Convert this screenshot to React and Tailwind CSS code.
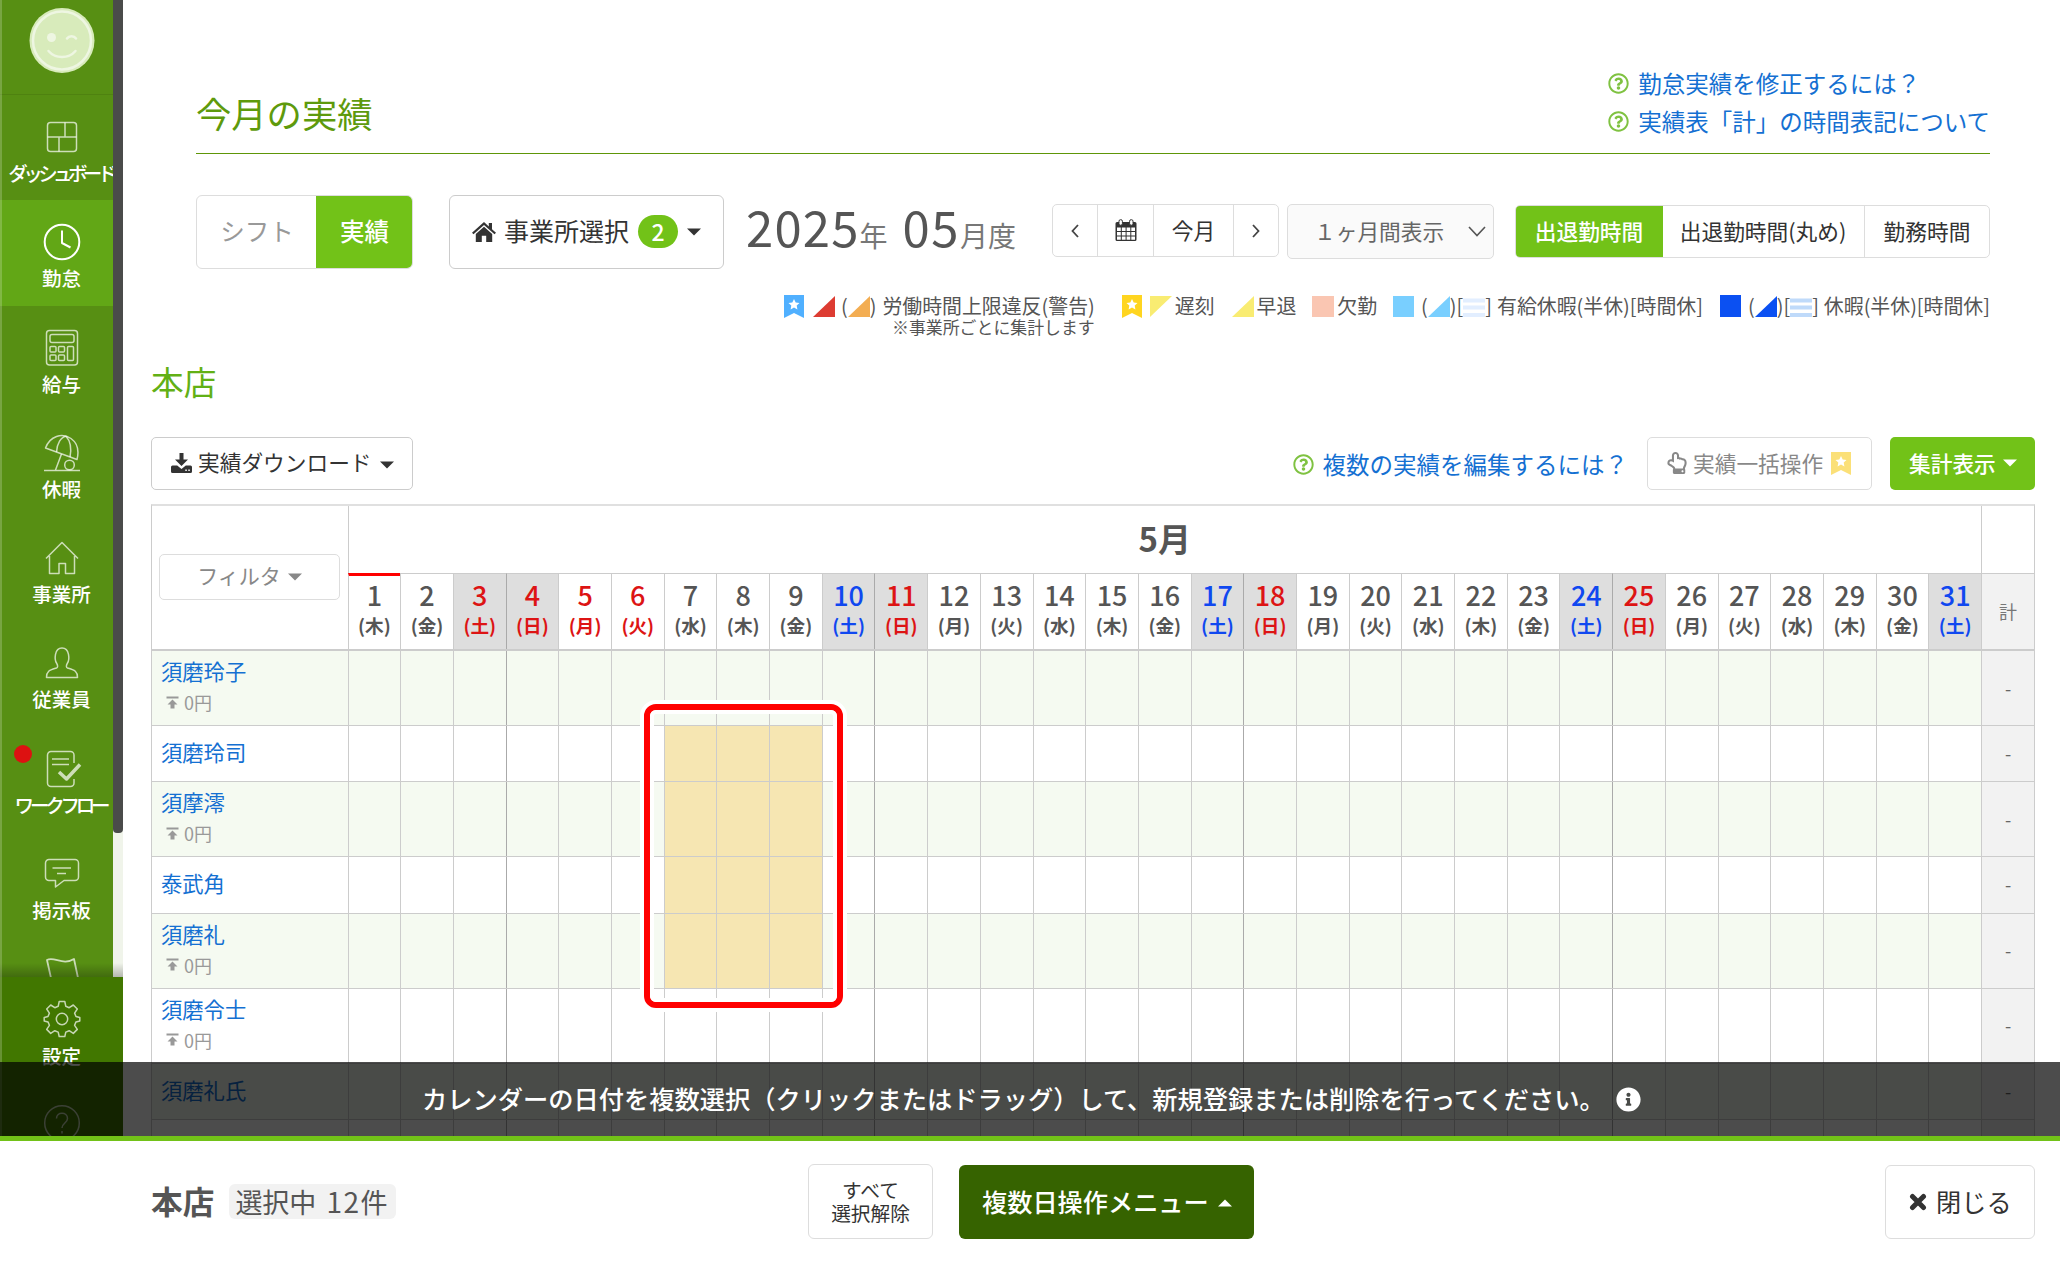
import clsx from "clsx";
import { FaInfoCircle, FaRegHandPointUp, FaRegQuestionCircle } from "react-icons/fa";

const WEEK = ["木", "金", "土", "日", "月", "火", "水"];
const RED_DAYS = [3, 4, 5, 6, 11, 18, 25];
const BLUE_DAYS = [10, 17, 24, 31];
const GRAY_DAYS = [3, 4, 10, 11, 17, 18, 24, 25, 31];
const SUNDAYS = [4, 11, 18, 25];

const days = Array.from({ length: 31 }, (_, i) => ({ day: i + 1, week: WEEK[i % 7] }));

const employees = [
  { name: "須磨玲子", pay: "0円" },
  { name: "須磨玲司", selected: true },
  { name: "須摩澪", pay: "0円", selected: true },
  { name: "泰武角", selected: true },
  { name: "須磨礼", pay: "0円", selected: true },
  { name: "須磨令士", pay: "0円" },
  { name: "須磨礼氏" },
  { name: "" },
];

/* ---------- icons ---------- */

const Line = ({ w, h, sw = 1.5, children, className }) => (
  <svg width={w} height={h} viewBox={`0 0 ${w} ${h}`} fill="none" stroke="currentColor" strokeWidth={sw} strokeLinejoin="round" className={className}>
    {children}
  </svg>
);

const DashboardIcon = () => (
  <Line w={32} h={32}>
    <rect x="1.5" y="1.5" width="29" height="29" rx="3" />
    <path d="M1.5 16h29M19 1.5V16M13 16v14.5" />
  </Line>
);

const ClockIcon = () => (
  <Line w={38} h={38} sw={2}>
    <circle cx="19" cy="19" r="17.3" />
    <path d="M19 7.5V20l8.5 4.5" />
  </Line>
);

const CalcIcon = () => (
  <Line w={34} h={38}>
    <rect x="1.5" y="1.5" width="31" height="34.5" rx="3" />
    <rect x="5" y="5.5" width="24" height="8" rx="2" />
    <rect x="5" y="17.5" width="6" height="5.5" rx="1" />
    <rect x="13.5" y="17.5" width="6" height="5.5" rx="1" />
    <rect x="5" y="26" width="6" height="5.5" rx="1" />
    <rect x="13.5" y="26" width="6" height="5.5" rx="1" />
    <rect x="22.5" y="17.5" width="6" height="14" rx="1" />
  </Line>
);

const ParasolIcon = () => (
  <Line w={36} h={38}>
    <path d="M1.5 14C6 2 18-1.500 27 4.500c7 5 8 13 6 21z" />
    <path d="M12.500 18C13 9 17 3 22 2.200M26 23c1.500-8 .5-16-4-20.800M17.500 20 11.500 36" />
    <circle cx="25.500" cy="31" r="4.800" />
    <path d="M0 36.500h36" />
  </Line>
);

const HouseIcon = () => (
  <Line w={34} h={36}>
    <path d="M1 18.500 17 2.500l16 16M4.500 16v17.500h9.500V23.500h6.500v10h9V16" />
  </Line>
);

const PersonIcon = () => (
  <Line w={34} h={34}>
    <path d="M1.500 31.500c0-6 2.500-7.500 10-9.500 1.500-.5 1.500-2.500 0-5-2-3-2.500-15 5.500-15s7.500 12 5.500 15c-1.500 2.500-1.500 4.500 0 5 7.500 2 10 3.500 10 9.500z" />
  </Line>
);

const WorkflowIcon = () => (
  <Line w={36} h={38} className="ml-1">
    <path d="M28 13V5a3.500 3.500 0 0 0-3.500-3.500H5A3.500 3.500 0 0 0 1.500 5v28A3.500 3.500 0 0 0 5 36.500h19.500A3.500 3.500 0 0 0 28 33v-4M6 9h17M6 14.500h17" />
    <path d="M13 22l7.500 7L34 14.500" strokeWidth="3.500" />
  </Line>
);

const BoardIcon = () => (
  <Line w={36} h={32}>
    <path d="M5 1.500h26A3.500 3.500 0 0 1 34.500 5v14a3.500 3.500 0 0 1-3.500 3.500H20L11.500 29v-6.500H5A3.500 3.500 0 0 1 1.500 19V5A3.500 3.500 0 0 1 5 1.500zM8.500 10H27M13 15.500h9" />
  </Line>
);

const FlagIcon = () => (
  <Line w={34} h={44} sw={1.8}>
    <path d="M8 30 2 3C9-1 18 9 29 2l5.500 26" />
  </Line>
);

const GearIcon = () => (
  <Line w={38} h={38}>
    <circle cx="19" cy="19" r="5.700" />
    <path d="M16.200 1.500h5.600l1 4.800 3.400 1.400 4.100-2.700 4 4-2.700 4.100 1.400 3.400 3.800.9v3.500l-3.800 1-1.400 3.400 2.700 4.100-4 4-4.100-2.700-3.400 1.400-1 4.400h-5.600l-1-4.400-3.400-1.400-4.100 2.700-4-4 2.700-4.100L5 21.900l-3.800-1v-3.500l3.800-.9 1.400-3.400L3.700 9l4-4 4.100 2.700 3.400-1.400z" />
  </Line>
);

const HelpIcon = () => (
  <Line w={38} h={38}>
    <circle cx="19" cy="19" r="17.300" />
    <path d="M13.500 14.500c0-7 11-7 11 0 0 4.500-5.500 4.500-5.500 9.500M19 27v2.500" />
  </Line>
);

const HomeSolid = () => (
  <svg width="24" height="20" viewBox="0 0 24 20" fill="#333">
    <path d="M12 0 0 10.800l1.500 1.500L12 3l10.500 9.300L24 10.800l-4-3.600V1h-3.200v3.400z" />
    <path d="M12 4.800 3.800 12v8h6v-6.200h4.400V20h6v-8z" />
  </svg>
);

const CalendarSolid = () => (
  <svg width="22" height="23" viewBox="0 0 22 23">
    <path d="M2 3h18a1.500 1.500 0 0 1 1.500 1.500v16A1.500 1.500 0 0 1 20 22H2a1.500 1.500 0 0 1-1.500-1.500v-16A1.500 1.500 0 0 1 2 3z" fill="#333" />
    <path d="M2 8.500h3.800V12H2zM6.800 8.500h3.800V12H6.800zM11.600 8.500h3.700V12h-3.700zM16.300 8.500H20V12h-3.700zM2 13h3.800v3.400H2zM6.800 13h3.800v3.400H6.800zM11.600 13h3.700v3.400h-3.700zM16.300 13H20v3.400h-3.700zM2 17.400h3.800v3.300H2zM6.800 17.400h3.800v3.300H6.800zM11.600 17.400h3.700v3.300h-3.700zM16.300 17.400H20v3.300h-3.700z" fill="#fff" />
    <rect x="4" y=".7" width="3.400" height="5.500" rx="1.500" fill="#fff" stroke="#333" />
    <rect x="14.600" y=".7" width="3.400" height="5.500" rx="1.500" fill="#fff" stroke="#333" />
  </svg>
);

const DownloadSolid = () => (
  <svg width="21" height="20" viewBox="0 0 21 20" fill="#333">
    <path d="M8.500 0h4v6.500h4.500l-6.500 6.500L4 6.500h4.500z" />
    <path d="M1.500 12.500h4.700l4.300 3.500 4.300-3.500h4.700A1.500 1.500 0 0 1 21 14v4.500a1.500 1.500 0 0 1-1.500 1.500h-18A1.500 1.500 0 0 1 0 18.500V14a1.500 1.500 0 0 1 1.500-1.500z" />
    <path d="M14.300 16.500h1.500V18h-1.500zM17.300 16.500h1.500V18h-1.500z" fill="#fff" />
  </svg>
);

const CloseSolid = () => (
  <svg width="18" height="18" viewBox="0 0 18 18" stroke="#333" strokeWidth="5" strokeLinecap="round">
    <path d="M3.500 3.500l11 11M14.500 3.500l-11 11" />
  </svg>
);

const PayIcon = () => (
  <svg width="13" height="13" viewBox="0 0 13 13" fill="#999">
    <path d="M.5.500h12v2H.5zM6.500 3.500l5 5H8.500v4h-4v-4h-3z" />
  </svg>
);

const Bookmark = ({ className }) => (
  <svg width="20" height="23" viewBox="0 0 20 23" className={className}>
    <path d="M0 0h20v23l-10-5-10 5z" fill="currentColor" />
    <path d="M10 4l1.700 3.500 3.800.5-2.800 2.600.7 3.800-3.400-1.800-3.400 1.800.7-3.800L4.500 8l3.800-.5z" fill="#fff" />
  </svg>
);

const Corner = ({ className }) => (
  <svg width="22" height="21" viewBox="0 0 22 21" className={className}>
    <path d="M22 0v21H0z" fill="currentColor" />
  </svg>
);

const Stripes = ({ className }) => (
  <svg width="22" height="21" viewBox="0 0 22 21" className={className}>
    <path d="M0 2.500h22v4H0zM0 9.500h22v4H0zM0 17h22v4H0z" fill="currentColor" />
  </svg>
);

const Caret = ({ up, className }) => (
  <svg width="14" height="8" viewBox="0 0 14 8" fill="currentColor" className={className}>
    <path d={up ? "M0 7.500h14L7 .5z" : "M0 .5h14L7 7.500z"} />
  </svg>
);

const Chevron = ({ d }) => (
  <svg width="8" height="14" viewBox="0 0 8 14" fill="none" stroke="#444" strokeWidth="1.800">
    <path d={d} />
  </svg>
);

/* ---------- sidebar ---------- */

const navItems = [
  { label: "ダッシュボード", icon: DashboardIcon, spacing: "mr-[2px] tracking-[-4.600px]" },
  { label: "勤怠", icon: ClockIcon, active: true },
  { label: "給与", icon: CalcIcon },
  { label: "休暇", icon: ParasolIcon },
  { label: "事業所", icon: HouseIcon },
  { label: "従業員", icon: PersonIcon },
  { label: "ワークフロー", icon: WorkflowIcon, spacing: "mr-[2px] tracking-[-4.200px]", badge: true },
  { label: "掲示板", icon: BoardIcon },
  { label: "", icon: FlagIcon },
];

const NavItem = ({ item }) => {
  const Icon = item.icon;
  return (
    <div className={clsx("relative flex h-[105.300px] shrink-0 flex-col items-center", item.active ? "bg-[#62a716] text-white" : "text-white/70")}>
      {item.badge && <span className="absolute top-[18px] left-[14px] size-[18px] rounded-full bg-[#dd1111]" />}
      <div className="mt-[22px] flex h-10 items-center">
        <Icon />
      </div>
      <div className={clsx("mt-[2px] h-7 text-[19.500px] leading-7 font-medium whitespace-nowrap text-white", item.spacing)}>{item.label}</div>
    </div>
  );
};

const Sidebar = () => (
  <aside className="relative flex w-[123px] shrink-0 flex-col bg-[#578f13]">
    <div className="flex h-[977px] flex-col overflow-hidden">
      <div className="flex h-[95px] shrink-0 justify-center border-b border-[#4f8210] pt-2">
        <svg width="66" height="66" viewBox="0 0 66 66" fill="none" stroke="#eef6e2" strokeLinecap="round">
          <circle cx="33" cy="32.500" r="32.500" fill="#d8ebbb" stroke="none" />
          <circle cx="33" cy="32.500" r="29" strokeWidth="2.500" />
          <circle cx="22.500" cy="29.500" r="4.500" fill="#eef6e2" stroke="none" />
          <path d="M38 30.500c2-3 7-3 9 0M19.500 43c7 8 20 8 27 0" strokeWidth="2.500" />
        </svg>
      </div>
      {navItems.map((item) => (
        <NavItem key={item.label} item={item} />
      ))}
    </div>
    <div className="absolute top-0 right-0 h-[977px] w-[10px] bg-[#f0f4ea]">
      <div className="h-[833px] rounded-b-[4px] bg-[#4a4b4a]" />
    </div>
    <div className="absolute top-[963px] left-0 h-[14px] w-full bg-linear-to-b from-black/0 to-black/25" />
    <div className="flex h-[159px] flex-col items-center overflow-hidden bg-[#417700] text-white/70">
      <div className="mt-[23px] flex h-10 items-center">
        <GearIcon />
      </div>
      <div className="mt-[4px] h-7 text-[19.500px] leading-7 font-medium text-white">設定</div>
      <div className="mt-[34px]">
        <HelpIcon />
      </div>
    </div>
    <div className="absolute top-0 left-0 h-full w-[2px] bg-white/20" />
  </aside>
);

/* ---------- page parts ---------- */

const HelpLink = ({ children }) => (
  <a className="flex items-center gap-[9px] text-[23.500px] leading-[38px] whitespace-nowrap text-[#1470d2]">
    <FaRegQuestionCircle className="mt-px size-[21px] text-[#7fc241]" />
    {children}
  </a>
);

const Toolbar = () => (
  <div className="mt-[41px] flex h-[74px] text-[#333]">
    <div className="flex w-[217px] overflow-hidden rounded-[6px] border border-[#ddd] text-[24.500px]">
      <div className="flex w-[120px] items-center justify-center pb-[2px] text-[#999]">シフト</div>
      <div className="-m-px flex flex-1 items-center justify-center bg-[#72c218] pb-[2px] font-medium text-white">実績</div>
    </div>
    <div className="ml-[36px] flex w-[275px] items-center rounded-[6px] border border-[#ccc] pb-px pl-[22px] text-[25px]">
      <HomeSolid />
      <span className="ml-[8px] pb-px">事業所選択</span>
      <span className="ml-[9px] flex h-[33px] w-[40px] items-center justify-center rounded-full bg-[#72c218] text-[23px] font-medium text-white">2</span>
      <Caret className="ml-[9px]" />
    </div>
    <div className="ml-[22px] flex w-[306px] items-baseline text-[28px] leading-[62px] whitespace-nowrap text-[#777]">
      <span className="text-[49px] tracking-[1.200px] text-[#555]">2025</span>年
      <span className="ml-[15px] text-[49px] tracking-[1.500px] text-[#555]">05</span>月度
    </div>
    <div className="mt-[9px] flex h-[53px] w-[227px] divide-x divide-[#ddd] rounded-[5px] border border-[#ddd] text-[21.700px]">
      <div className="flex w-[45px] items-center justify-center"><Chevron d="M7 1 1.500 7 7 13" /></div>
      <div className="flex w-[56px] items-center justify-center"><CalendarSolid /></div>
      <div className="flex w-[80px] items-center justify-center pb-px">今月</div>
      <div className="flex flex-1 items-center justify-center"><Chevron d="M1 1l5.500 6L1 13" /></div>
    </div>
    <div className="mt-[9px] ml-[8px] flex h-[55px] w-[207px] items-center justify-between rounded-[5px] border border-[#ddd] bg-[#fafafa] pr-[7px] pl-[26px] text-[21.700px] whitespace-nowrap text-[#666]">
      １ヶ月間表示
      <svg width="18" height="11" viewBox="0 0 18 11" fill="none" stroke="#555" strokeWidth="1.600"><path d="M1 1l8 8.500L17 1" /></svg>
    </div>
    <div className="mt-[10px] ml-auto flex h-[53px] w-[475px] overflow-hidden rounded-[5px] border border-[#ddd] text-[21.700px]">
      <div className="-m-px flex w-[148px] items-center justify-center bg-[#72c218] pb-px font-medium text-white">出退勤時間</div>
      <div className="flex w-[203px] items-center justify-center border-r border-[#ddd] pb-px">出退勤時間(丸め)</div>
      <div className="flex flex-1 items-center justify-center pb-px">勤務時間</div>
    </div>
  </div>
);

const Legend = () => (
  <div className="mt-[20px] flex h-[47px] justify-end text-[19.900px] leading-[34px] whitespace-nowrap text-[#555]">
    <div>
      <div className="mt-[5px] flex h-[24px] items-center leading-[24px]">
        <Bookmark className="text-[#50b0ff]" />
        <Corner className="ml-[9px] text-[#dd3c32]" />
        <span className="ml-[6px]">(</span>
        <Corner className="text-[#f3ad52]" />
        <span>)</span>
        <span className="ml-[6px]">労働時間上限違反(警告)</span>
      </div>
      <div className="text-right text-[16.900px] leading-[17px]">※事業所ごとに集計します</div>
    </div>
    <div className="ml-[27px] flex h-[34px] items-center">
      <Bookmark className="text-[#ffd520]" />
      <Corner className="ml-[8px] rotate-180 text-[#f9ec72]" />
      <span className="ml-[3px]">遅刻</span>
      <Corner className="ml-[17px] text-[#f9ec72]" />
      <span className="ml-[3px]">早退</span>
      <span className="ml-[16px] h-[21px] w-[22px] bg-[#fac6b2]" />
      <span className="ml-[3px]">欠勤</span>
      <span className="ml-[16px] h-[21px] w-[21px] bg-[#79cfff]" />
      <span className="ml-[7px]">(</span>
      <Corner className="text-[#79cfff]" />
      <span>)[</span>
      <Stripes className="text-[#e2eeff]" />
      <span>]</span>
      <span className="ml-[5px]">有給休暇(半休)[時間休]</span>
      <span className="ml-[17px] h-[22px] w-[21px] bg-[#0b50f2]" />
      <span className="ml-[7px]">(</span>
      <Corner className="text-[#0b50f2]" />
      <span>)[</span>
      <Stripes className="text-[#bfdafa]" />
      <span>]</span>
      <span className="ml-[5px]">休暇(半休)[時間休]</span>
    </div>
  </div>
);

const ShopActions = () => (
  <div className="mt-[36px] flex h-[53px] items-stretch text-[21.700px] text-[#333]">
    <button className="flex w-[262px] items-center rounded-[5px] border border-[#ccc] pb-[2px] pl-[19px]">
      <DownloadSolid />
      <span className="ml-[6px]">実績ダウンロード</span>
      <Caret className="mt-1 ml-[8px]" />
    </button>
    <div className="ml-auto flex items-center">
      <HelpLink>複数の実績を編集するには？</HelpLink>
    </div>
    <button className="ml-[19px] flex w-[225px] items-center rounded-[5px] border border-[#ddd] pb-px pl-[18px] text-[#888]">
      <FaRegHandPointUp className="size-[22px]" />
      <span className="ml-[5px]">実績一括操作</span>
      <Bookmark className="ml-[8px] text-[#fbe078]" />
    </button>
    <button className="ml-[18px] flex w-[145px] items-center rounded-[5px] bg-[#72c218] pb-px pl-[19px] font-medium text-white">
      集計表示
      <Caret className="ml-[7px]" />
    </button>
  </div>
);

const DayHead = ({ day, week }) => (
  <div
    className={clsx(
      "flex flex-col items-center border-l text-center",
      SUNDAYS.includes(day) ? "border-l-[#aaa]" : "border-l-[#ccc]",
      GRAY_DAYS.includes(day) && "bg-[#dedede]",
      RED_DAYS.includes(day) ? "text-[#dd1414]" : BLUE_DAYS.includes(day) ? "text-[#1048f0]" : "text-[#555]",
      day === 1 ? "border-t-[3px] border-t-[#ff0000]" : "border-t border-t-[#ccc] pt-[2px]"
    )}
  >
    <div className="mt-[4px] text-[27px] leading-[30px] font-medium">{day}</div>
    <div className="text-[18.600px] leading-[30px] font-bold">({week})</div>
  </div>
);

const Row = ({ emp, odd }) => (
  <div className={clsx("flex shrink-0 border-b border-[#ccc]", emp.pay ? "h-[75px]" : "h-[56.300px]", odd && "bg-[#f5faf1]")}>
    <div className="w-[195.500px] pl-[9px]">
      <div className={clsx("text-[21.300px] text-[#1470d2]", emp.pay ? "pt-[4px] leading-[32px]" : "leading-[52px]")}>{emp.name}</div>
      {emp.pay && (
        <div className="flex items-center gap-[5px] pl-[5px] text-[18px] leading-[30px] text-[#999]">
          <PayIcon />
          {emp.pay}
        </div>
      )}
    </div>
    <div className="grid w-[1633.500px] grid-cols-31">
      {days.map(({ day }) => (
        <div
          key={day}
          className={clsx(
            "border-l",
            SUNDAYS.includes(day) ? "border-[#aaa]" : "border-[#ccc]",
            emp.selected && day >= 7 && day <= 9 && "bg-[#f6e6b2]"
          )}
        />
      ))}
    </div>
    <div className="flex flex-1 items-center justify-center border-l border-[#ccc] bg-[#f2f2f2] text-[18px] text-[#666]">{emp.name && "-"}</div>
  </div>
);

const ShiftTable = () => (
  <div className="relative mt-[14px] flex h-[632px] w-[1884px] flex-col overflow-hidden border-x border-t-2 border-x-[#ccc] border-t-[#e0e0e0]">
    <div className="flex h-[145px] shrink-0 border-b-2 border-[#ccc]">
      <div className="w-[195.500px] pt-[48px] pl-[7px]">
        <button className="flex h-[46px] w-[181px] items-center justify-center rounded-[5px] border border-[#ddd] pb-[2px] text-[21px] text-[#888]">
          フィルタ
          <Caret className="mt-[2px] ml-[7px]" />
        </button>
      </div>
      <div className="flex w-[1633.500px] flex-col">
        <div className="h-[67px] border-l border-[#ccc] text-center text-[33px] leading-[65px] font-bold text-[#555]">5月</div>
        <div className="grid flex-1 grid-cols-31">
          {days.map((d) => (
            <DayHead key={d.day} {...d} />
          ))}
        </div>
      </div>
      <div className="flex flex-1 flex-col border-l border-[#ccc]">
        <div className="h-[67px]" />
        <div className="flex flex-1 items-center justify-center border-t border-[#ccc] bg-[#f2f2f2] text-[18px] text-[#777]">計</div>
      </div>
    </div>
    {employees.map((emp, i) => (
      <Row key={i} emp={emp} odd={i % 2 === 0} />
    ))}
    {/* highlight around the selected cells */}
    <div className="absolute top-[194px] left-[488px] h-[312px] w-[207px] rounded-[16px] border-4 border-white">
      <div className="size-full rounded-[12px] border-[6px] border-[#ff0000]">
        <div className="size-full rounded-[6px] border-4 border-white" />
      </div>
    </div>
  </div>
);

const Footer = () => (
  <footer className="flex h-[125px] border-t-[5px] border-[#72c218] bg-white pt-[23px] pr-[25px] pl-[151px]">
    <div className="flex h-[75px] w-[657px] items-center text-[#555]">
      <span className="pb-px text-[31.700px] font-bold">本店</span>
      <span className="ml-[15px] h-[35px] w-[167px] rounded-[6px] bg-[#f2f2f2] pl-[6px] text-[27px] leading-[34px] whitespace-nowrap">
        選択中<span className="ml-[10px] text-[28px] tracking-[1.500px]">12</span>件
      </span>
    </div>
    <button className="h-[75px] w-[125px] rounded-[6px] border border-[#ddd] pb-[2px] text-[19.700px] leading-[23px] text-[#333]">
      すべて
      <br />
      選択解除
    </button>
    <button className="mt-px ml-[26px] flex h-[74px] w-[295px] items-center rounded-[6px] bg-[#366300] pb-px pl-[23px] text-[25.200px] font-medium whitespace-nowrap text-white">
      複数日操作メニュー
      <Caret up className="mt-[2px] ml-[9px]" />
    </button>
    <button className="mt-px ml-auto flex h-[74px] w-[150px] items-center rounded-[6px] border border-[#ddd] pl-[23px] text-[25.200px] whitespace-nowrap text-[#333]">
      <CloseSolid />
      <span className="ml-[9px]">閉じる</span>
    </button>
  </footer>
);

const App = () => (
  <div className="relative flex h-[1261px] w-[2060px] flex-col overflow-hidden bg-white font-['Noto_Sans_CJK_JP',sans-serif]">
    <div className="flex h-[1136px] overflow-hidden">
      <Sidebar />
      <main className="flex-1 pl-[28px]">
        <div className="mr-[70px] ml-[45px]">
          <div className="flex h-[154px] justify-between border-b border-[#5e9608]">
            <h1 className="pt-[88px] text-[35.300px] leading-[50px] text-[#5e9a0c]">今月の実績</h1>
            <div className="pt-[64px]">
              <HelpLink>勤怠実績を修正するには？</HelpLink>
              <HelpLink>実績表「計」の時間表記について</HelpLink>
            </div>
          </div>
          <Toolbar />
          <Legend />
        </div>
        <div className="mr-[25px]">
          <h2 className="mt-[25px] text-[32.700px] leading-[40px] text-[#62b015]">本店</h2>
          <ShopActions />
        </div>
        <ShiftTable />
      </main>
    </div>
    <Footer />
    <div className="absolute top-[1062px] left-0 flex h-[74px] w-full items-center bg-black/70 pl-[422px] text-[25.250px] font-medium whitespace-nowrap text-white">
      カレンダーの日付を複数選択（クリックまたはドラッグ）して、新規登録または削除を行ってください。
      <FaInfoCircle className="ml-[11px] size-[25px]" />
    </div>
  </div>
);

export default App;
